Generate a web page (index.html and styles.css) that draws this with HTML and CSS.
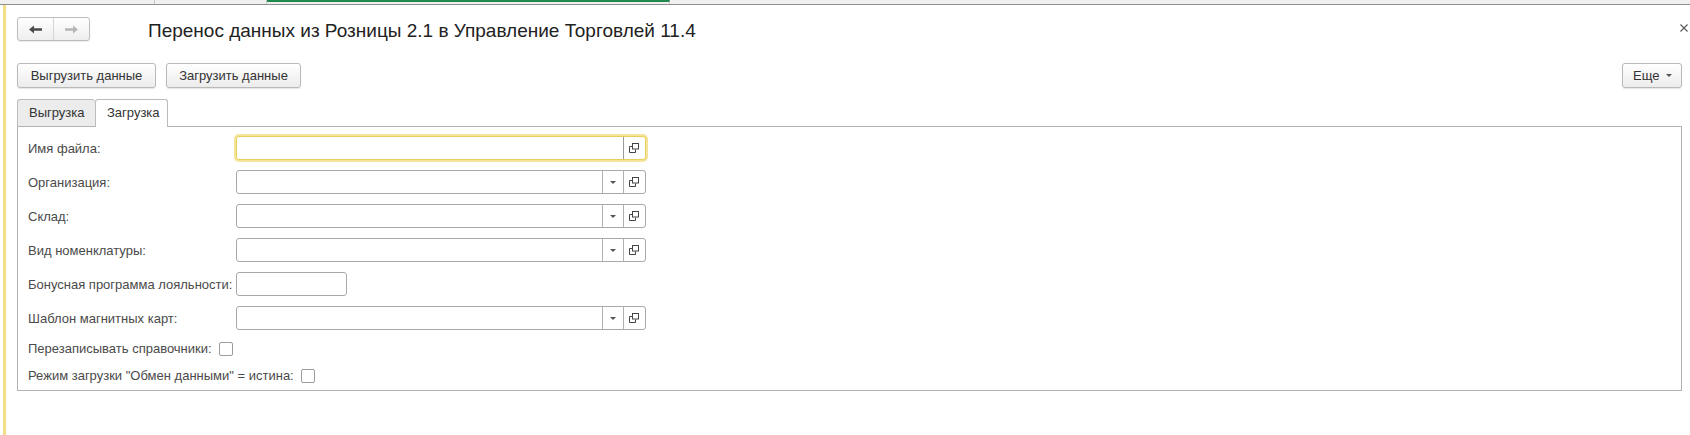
FILE: index.html
```html
<!DOCTYPE html>
<html lang="ru">
<head>
<meta charset="utf-8">
<title>Перенос данных</title>
<link rel="stylesheet" href="styles.css">
</head>
<body>
<div class="topbar">
  <div class="seg seg-a"></div>
  <div class="seg seg-b"></div>
  <div class="seg seg-active"></div>
  <div class="seg seg-rest"></div>
</div>
<div class="app">
  <div class="strip"></div>
  <div class="window">
    <div class="header">
      <div class="nav">
        <span class="nav-btn">
          <svg width="13" height="9" viewBox="0 0 13 9"><path d="M0 4.5L5 0.5V3.3H13V5.7H5V8.5Z" fill="#4a4a4a"/></svg>
        </span>
        <span class="nav-btn">
          <svg width="13" height="9" viewBox="0 0 13 9"><path d="M13 4.5L8 0.5V3.3H0V5.7H8V8.5Z" fill="#b5b5b5"/></svg>
        </span>
      </div>
      <div class="title">Перенос данных из Розницы 2.1 в Управление Торговлей 11.4</div>
      <div class="close">
        <svg width="8" height="8" viewBox="0 0 8 8"><path d="M0.5 0.5L7.5 7.5M7.5 0.5L0.5 7.5" stroke="#555" stroke-width="1.1"/></svg>
      </div>
    </div>
    <div class="toolbar">
      <button class="btn btn-export">Выгрузить данные</button>
      <button class="btn btn-import">Загрузить данные</button>
      <button class="btn btn-more">Еще <span class="caret"></span></button>
    </div>
    <div class="tabs">
      <div class="tab">Выгрузка</div>
      <div class="tab tab-active">Загрузка</div>
    </div>
    <div class="panel">
      <div class="form">
        <label class="lbl">Имя файла:</label>
        <div class="field field-focus">
          <div class="field-main"></div>
          <div class="field-btn"><svg width="11" height="10" viewBox="0 0 11 10"><path d="M3.5 3.5H0.5V9.5H6.5V6.5" fill="none" stroke="#444"/><rect x="3.5" y="0.5" width="6" height="5.5" fill="none" stroke="#444"/></svg></div>
        </div>

        <label class="lbl">Организация:</label>
        <div class="field">
          <div class="field-main"></div>
          <div class="field-btn drop"><span class="tri"></span></div>
          <div class="field-btn"><svg width="11" height="10" viewBox="0 0 11 10"><path d="M3.5 3.5H0.5V9.5H6.5V6.5" fill="none" stroke="#444"/><rect x="3.5" y="0.5" width="6" height="5.5" fill="none" stroke="#444"/></svg></div>
        </div>

        <label class="lbl">Склад:</label>
        <div class="field">
          <div class="field-main"></div>
          <div class="field-btn drop"><span class="tri"></span></div>
          <div class="field-btn"><svg width="11" height="10" viewBox="0 0 11 10"><path d="M3.5 3.5H0.5V9.5H6.5V6.5" fill="none" stroke="#444"/><rect x="3.5" y="0.5" width="6" height="5.5" fill="none" stroke="#444"/></svg></div>
        </div>

        <label class="lbl">Вид номенклатуры:</label>
        <div class="field">
          <div class="field-main"></div>
          <div class="field-btn drop"><span class="tri"></span></div>
          <div class="field-btn"><svg width="11" height="10" viewBox="0 0 11 10"><path d="M3.5 3.5H0.5V9.5H6.5V6.5" fill="none" stroke="#444"/><rect x="3.5" y="0.5" width="6" height="5.5" fill="none" stroke="#444"/></svg></div>
        </div>

        <label class="lbl">Бонусная программа лояльности:</label>
        <div class="field field-short">
          <div class="field-main"></div>
        </div>

        <label class="lbl">Шаблон магнитных карт:</label>
        <div class="field">
          <div class="field-main"></div>
          <div class="field-btn drop"><span class="tri"></span></div>
          <div class="field-btn"><svg width="11" height="10" viewBox="0 0 11 10"><path d="M3.5 3.5H0.5V9.5H6.5V6.5" fill="none" stroke="#444"/><rect x="3.5" y="0.5" width="6" height="5.5" fill="none" stroke="#444"/></svg></div>
        </div>
      </div>
      <div class="checks">
        <div class="check-row"><span class="lbl">Перезаписывать справочники:</span><span class="checkbox"></span></div>
        <div class="check-row"><span class="lbl">Режим загрузки "Обмен данными" = истина:</span><span class="checkbox"></span></div>
      </div>
    </div>
  </div>
</div>
</body>
</html>
```

FILE: styles.css
```css
* { box-sizing: border-box; }
html, body { margin: 0; padding: 0; background: #fff; }
body {
  font-family: "Liberation Sans", Arial, sans-serif;
  font-size: 13px;
  color: #333;
  width: 1690px;
  height: 435px;
  overflow: hidden;
}

.topbar {
  display: flex;
  height: 5px;
  background: #f0f0f0;
  border-bottom: 1px solid #8f8f8f;
}
.seg { height: 4px; }
.seg-a { width: 155px; border-right: 1px solid #c8c8c8; }
.seg-b { width: 112px; border-right: 1px solid #c8c8c8; }
.seg-active { width: 403px; border-top: 2px solid #1f8a4c; border-right: 1px solid #c8c8c8; }
.seg-rest { flex: 1; }

.app {
  display: flex;
  height: 430px;
}
.strip {
  width: 3px;
  margin-left: 3px;
  background: #f4df88;
}
.window {
  flex: 1;
  padding: 12px 2px 0 11px;
}

.header {
  display: flex;
  align-items: flex-start;
  height: 24px;
}
.nav {
  display: flex;
  width: 73px;
  height: 24px;
  border: 1px solid #bdbdbd;
  border-radius: 3px;
  background: linear-gradient(#ffffff, #eeeeee);
  box-shadow: 0 1px 1px rgba(0,0,0,0.08);
}
.nav-btn {
  flex: 1;
  display: flex;
  align-items: center;
  justify-content: center;
}
.nav-btn + .nav-btn { border-left: 1px solid #d6d6d6; }
.title {
  margin-left: 58px;
  margin-top: 3px;
  font-size: 19px;
  line-height: 22px;
  color: #222;
  flex: 1;
  white-space: nowrap;
}
.close {
  margin-top: 7px;
  width: 8px;
  height: 8px;
  display: flex;
}

.toolbar {
  display: flex;
  gap: 10px;
  margin-top: 22px;
  margin-right: 6px;
}
.btn {
  font-family: inherit;
  font-size: 13px;
  color: #333;
  height: 25px;
  padding: 0;
  white-space: nowrap;
  text-align: center;
  border: 1px solid #b9b9b9;
  border-radius: 3px;
  background: linear-gradient(#ffffff, #ececec);
  box-shadow: 0 1px 1px rgba(0,0,0,0.1);
}
.btn-export { width: 139px; }
.btn-import { width: 135px; }
.btn-more {
  margin-left: auto;
  width: 60px;
  padding: 0 0 0 10px;
  text-align: left;
  display: flex;
  align-items: center;
  gap: 7px;
}
.caret {
  width: 0;
  height: 0;
  border-left: 3px solid transparent;
  border-right: 3px solid transparent;
  border-top: 3px solid #555;
}

.tabs {
  display: flex;
  margin-top: 11px;
  height: 27px;
  margin-right: 6px;
}
.tab {
  height: 27px;
  padding: 0 11px;
  line-height: 26px;
  border: 1px solid #bcbcbc;
  border-bottom: none;
  border-radius: 3px 3px 0 0;
  color: #333;
}
.tab:first-child {
  width: 78px;
  background: #ececec;
  border-right: none;
  height: 27px;
}
.tab-active {
  width: 73px;
  background: #fff;
  margin-bottom: -1px;
  height: 28px;
  position: relative;
  z-index: 1;
}

.panel {
  margin-right: 6px;
  border: 1px solid #b3b3b3;
  height: 265px;
  padding: 9px 0 0 10px;
}

.form {
  display: grid;
  grid-template-columns: 202px auto;
  column-gap: 6px;
  row-gap: 10px;
  align-items: center;
  justify-items: start;
}
.lbl {
  color: #4a4a4a;
  font-size: 13px;
  white-space: nowrap;
}
.field {
  display: flex;
  width: 410px;
  height: 24px;
  border: 1px solid #a9a9a9;
  border-radius: 3px;
  background: #fff;
}
.field-focus {
  border-color: #e6cf5a;
  box-shadow: 0 0 0 2px #f3e49a;
}
.field-short { width: 111px; }
.field-main { flex: 1; }
.field-btn {
  width: 22px;
  border-left: 1px solid #b0b0b0;
  display: flex;
  align-items: center;
  justify-content: center;
}
.field-btn.drop { width: 21px; }
.field-focus .field-btn { border-left-color: #9a9a9a; }
.tri {
  width: 0;
  height: 0;
  border-left: 3px solid transparent;
  border-right: 3px solid transparent;
  border-top: 3px solid #555;
}

.checks {
  display: flex;
  flex-direction: column;
  gap: 10px;
  margin-top: 10px;
}
.check-row {
  display: flex;
  align-items: center;
  gap: 7px;
  height: 17px;
}
.checkbox {
  width: 14px;
  height: 14px;
  border: 1px solid #9c9c9c;
  border-radius: 2px;
  background: #fff;
}
```
